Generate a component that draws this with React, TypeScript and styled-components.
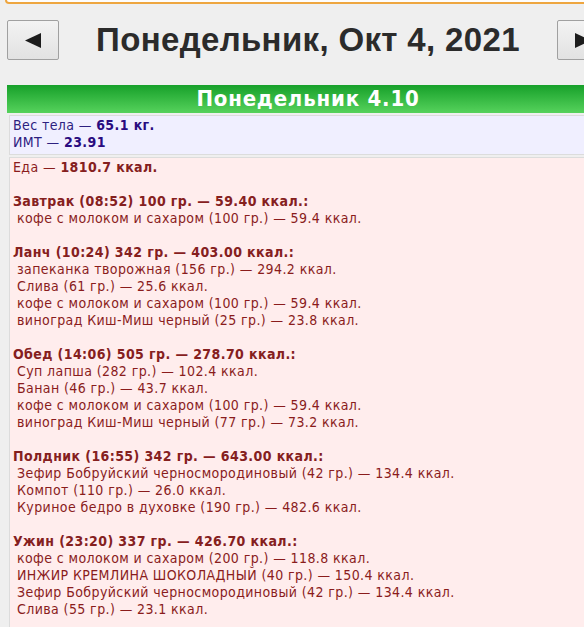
import React from "react";
import styled, { createGlobalStyle } from "styled-components";

const GlobalStyle = createGlobalStyle`
  html, body {
    margin: 0;
    padding: 0;
    background: #efefef;
    overflow: hidden;
  }
`;

const TopStrip = styled.div`
  margin-left: 5px;
  width: 640px;
  height: 2px;
  background: #fdfdfd;
  border: 2px solid #eea640;
  border-top: none;
  border-radius: 0 0 0 7px;
`;

const Page = styled.div`
  margin-left: 7px;
  width: 602px;
`;

const Header = styled.div`
  display: flex;
  align-items: center;
  justify-content: space-between;
  height: 40px;
  margin-top: 16px;
`;

const NavButton = styled.button`
  display: flex;
  align-items: center;
  justify-content: center;
  width: 52px;
  height: 40px;
  padding: 0;
  border: 1px solid #a0a0a0;
  border-radius: 2px;
  background: linear-gradient(#f3f3f3, #e2e2e2);
  cursor: pointer;
`;

const Title = styled.h1`
  margin: 0;
  font-family: "Liberation Sans", Arial, sans-serif;
  font-weight: bold;
  font-size: 33px;
  color: #2b2b2b;
  letter-spacing: 0.35px;
`;

const DayBar = styled.div`
  margin-top: 25px;
  height: 28px;
  background: linear-gradient(#17a02a, #56d25c);
  color: #fff;
  text-align: center;
  font-family: "DejaVu Sans Condensed", "DejaVu Sans", sans-serif;
  font-weight: bold;
  font-size: 22px;
  letter-spacing: 0.8px;
  line-height: 28px;
`;

const Panel = styled.div<{ $bg: string; $color: string; $strong: string }>`
  margin: 2px 0 0 2px;
  padding: 1px 3px 3px;
  background: ${(p) => p.$bg};
  border: 1px solid #dcdcdc;
  color: ${(p) => p.$color};
  font-family: "DejaVu Sans Condensed", "DejaVu Sans", sans-serif;
  font-size: 14px;
  letter-spacing: 0.4px;
  line-height: 17px;

  b {
    color: ${(p) => p.$strong};
  }
`;

const Line = styled.div<{ $indent?: boolean }>`
  padding-left: ${(p) => (p.$indent ? "4px" : "0")};
  white-space: nowrap;
`;

const Gap = styled.div`
  height: 17px;
`;

const Arrow = ({ dir }: { dir: "left" | "right" }) => (
  <svg width="16" height="15" viewBox="0 0 16 15">
    <polygon
      points={dir === "left" ? "16,0 16,15 0,7.5" : "0,0 0,15 16,7.5"}
      fill="#1c1c1c"
    />
  </svg>
);

type Meal = {
  title: string;
  items: string[];
};

const meals: Meal[] = [
  {
    title: "Завтрак (08:52) 100 гр. — 59.40 ккал.",
    items: ["кофе с молоком и сахаром (100 гр.) — 59.4 ккал."],
  },
  {
    title: "Ланч (10:24) 342 гр. — 403.00 ккал.",
    items: [
      "запеканка творожная (156 гр.) — 294.2 ккал.",
      "Слива (61 гр.) — 25.6 ккал.",
      "кофе с молоком и сахаром (100 гр.) — 59.4 ккал.",
      "виноград Киш-Миш черный (25 гр.) — 23.8 ккал.",
    ],
  },
  {
    title: "Обед (14:06) 505 гр. — 278.70 ккал.",
    items: [
      "Суп лапша (282 гр.) — 102.4 ккал.",
      "Банан (46 гр.) — 43.7 ккал.",
      "кофе с молоком и сахаром (100 гр.) — 59.4 ккал.",
      "виноград Киш-Миш черный (77 гр.) — 73.2 ккал.",
    ],
  },
  {
    title: "Полдник (16:55) 342 гр. — 643.00 ккал.",
    items: [
      "Зефир Бобруйский черносмородиновый (42 гр.) — 134.4 ккал.",
      "Компот (110 гр.) — 26.0 ккал.",
      "Куриное бедро в духовке (190 гр.) — 482.6 ккал.",
    ],
  },
  {
    title: "Ужин (23:20) 337 гр. — 426.70 ккал.",
    items: [
      "кофе с молоком и сахаром (200 гр.) — 118.8 ккал.",
      "ИНЖИР КРЕМЛИНА ШОКОЛАДНЫЙ (40 гр.) — 150.4 ккал.",
      "Зефир Бобруйский черносмородиновый (42 гр.) — 134.4 ккал.",
      "Слива (55 гр.) — 23.1 ккал.",
    ],
  },
];

export default function App() {
  return (
    <>
      <GlobalStyle />
      <TopStrip />
      <Page>
        <Header>
          <NavButton aria-label="Предыдущий день">
            <Arrow dir="left" />
          </NavButton>
          <Title>Понедельник, Окт 4, 2021</Title>
          <NavButton aria-label="Следующий день">
            <Arrow dir="right" />
          </NavButton>
        </Header>

        <DayBar>Понедельник 4.10</DayBar>

        <Panel $bg="#f0efff" $color="#2c2080" $strong="#2a0c80">
          <Line>
            Вес тела — <b>65.1 кг.</b>
          </Line>
          <Line>
            ИМТ — <b>23.91</b>
          </Line>
        </Panel>

        <Panel $bg="#ffeded" $color="#8a1c1c" $strong="#85201e">
          <Line>
            Еда — <b>1810.7 ккал.</b>
          </Line>
          {meals.map((meal) => (
            <React.Fragment key={meal.title}>
              <Gap />
              <Line>
                <b>{meal.title}:</b>
              </Line>
              {meal.items.map((item, i) => (
                <Line $indent key={i}>
                  {item}
                </Line>
              ))}
            </React.Fragment>
          ))}
          <Gap />
        </Panel>
      </Page>
    </>
  );
}
